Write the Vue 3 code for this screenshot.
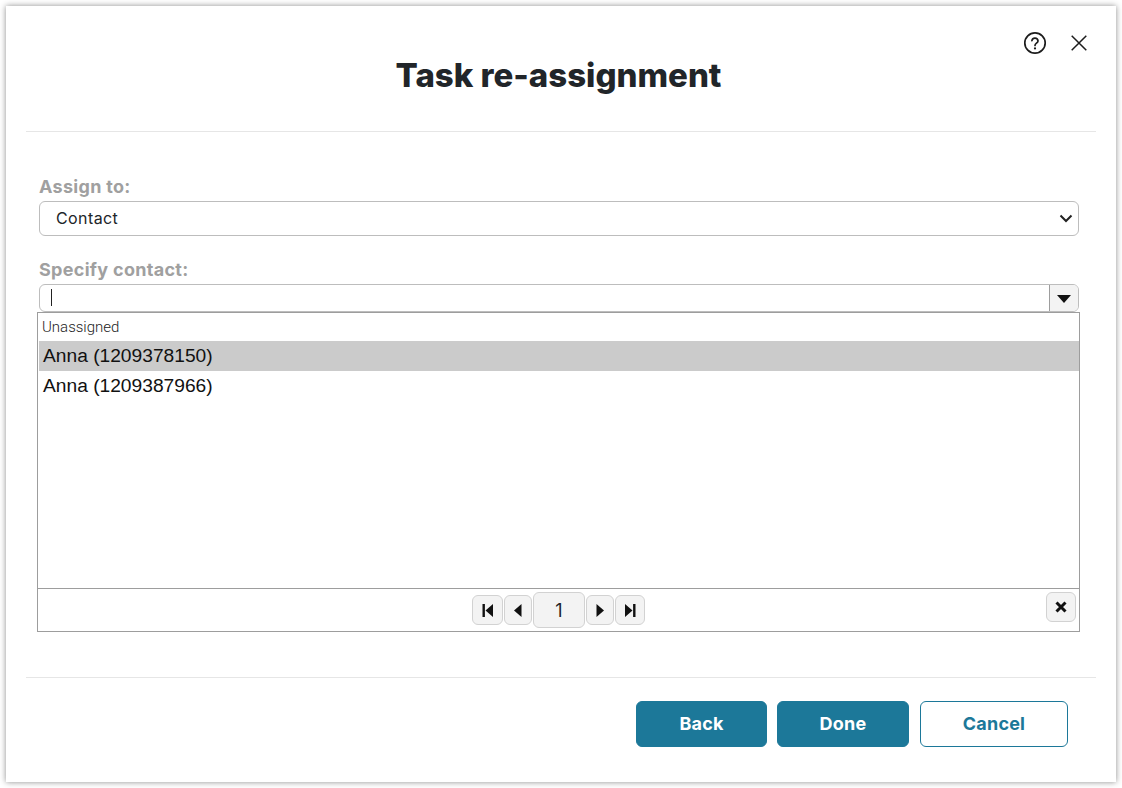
<script setup>
const contacts = [
  { name: 'Anna (1209378150)', selected: true },
  { name: 'Anna (1209387966)', selected: false },
]
</script>

<template>
  <div class="page">
    <div class="dialog">
      <header class="head">
        <span></span>
        <h1 class="title">Task re-assignment</h1>
        <div class="tools">
          <svg width="24" height="24" viewBox="0 0 24 24" fill="none" stroke="#1c1c1c" stroke-width="1.7">
            <circle cx="12" cy="12" r="10.2" />
            <path d="M8.9 9.6a3.1 3.1 0 0 1 6.1.3c0 2.1-3 2.4-3 4.5" stroke-linecap="round" />
            <circle cx="12" cy="17.4" r="1.1" fill="#1c1c1c" stroke="none" />
          </svg>
          <svg width="18" height="18" viewBox="0 0 18 18" fill="none" stroke="#1c1c1c" stroke-width="1.5">
            <path d="M1.7 1.7l14.6 14.6M16.3 1.7L1.7 16.3" />
          </svg>
        </div>
      </header>

      <main class="body">
        <label class="label first">Assign to:</label>
        <div class="select">
          <span>Contact</span>
          <svg width="14" height="9" viewBox="0 0 14 9" fill="none" stroke="#222" stroke-width="2">
            <path d="M1.5 1.5L7 7l5.5-5.5" />
          </svg>
        </div>

        <label class="label second">Specify contact:</label>
        <div class="combo">
          <div class="combo-input"><i class="caret"></i></div>
          <div class="combo-btn"><i class="tri-down"></i></div>
        </div>

        <div class="list">
          <div class="unassigned">Unassigned</div>
          <div class="rows">
            <div v-for="c in contacts" :key="c.name" class="row" :class="{ selected: c.selected }">{{ c.name }}</div>
          </div>
          <div class="pager">
            <div class="pages">
              <button class="pg w31">
                <svg width="13" height="15" viewBox="0 0 13 15"><path d="M1.5 1h2.4v13H1.500zM12 1v13L4.500 7.500z" fill="#111" /></svg>
              </button>
              <button class="pg w28">
                <svg width="12" height="15" viewBox="0 0 12 15"><path d="M9.500 1v13L2 7.500z" fill="#111" /></svg>
              </button>
              <button class="pg num">1</button>
              <button class="pg w28">
                <svg width="12" height="15" viewBox="0 0 12 15"><path d="M2.500 1v13L10 7.500z" fill="#111" /></svg>
              </button>
              <button class="pg w30">
                <svg width="13" height="15" viewBox="0 0 13 15"><path d="M1 1v13l7.500-6.500zM9.100 1h2.400v13H9.100z" fill="#111" /></svg>
              </button>
            </div>
            <button class="pg clear">
              <svg width="12" height="12" viewBox="0 0 12 12" fill="none" stroke="#111" stroke-width="3">
                <path d="M1.500 1.500l9 9M10.500 1.500l-9 9" />
              </svg>
            </button>
          </div>
        </div>
      </main>

      <footer class="foot">
        <button class="btn primary back">Back</button>
        <button class="btn primary done">Done</button>
        <button class="btn outline">Cancel</button>
      </footer>
    </div>
  </div>
</template>

<style>
html, body { margin: 0; background: #fff; }
</style>

<style scoped>
.page {
  width: 1122px;
  height: 788px;
  padding: 6px;
  box-sizing: border-box;
  overflow: hidden;
  font-family: Inter, "Liberation Sans", sans-serif;
}
.dialog {
  width: 1110px;
  height: 776px;
  background: #fff;
  box-shadow: 0 0 6px rgba(0, 0, 0, 0.45);
  display: flex;
  flex-direction: column;
}
.head {
  margin: 0 20px;
  height: 126px;
  box-sizing: border-box;
  border-bottom: 1px solid #e6e6e6;
  display: grid;
  grid-template-columns: 1fr auto 1fr;
}
.title {
  margin: 50px 5px 0 0;
  font-size: 33px;
  line-height: 39px;
  font-weight: 800;
  color: #212529;
}
.tools {
  justify-self: end;
  margin: 25px 8px 0 0;
  display: flex;
  align-items: center;
  gap: 23.5px;
  height: 24px;
}
.body {
  padding: 0 37px 0 31px;
  flex: 1;
  display: flex;
  flex-direction: column;
}
.label {
  display: block;
  margin-left: 2px;
  font-size: 18px;
  line-height: 20px;
  font-weight: 700;
  letter-spacing: 0.3px;
  color: #a0a0a0;
}
.label.first { margin-top: 45px; margin-bottom: 4px; }
.label.second { margin-top: 24px; margin-bottom: 4px; }
.select {
  margin-left: 2px;
  height: 35px;
  box-sizing: border-box;
  border: 1px solid #bdbdbd;
  border-radius: 6px;
  padding: 0 5px 0 16px;
  display: flex;
  align-items: center;
  justify-content: space-between;
  font-size: 16px;
  color: #212529;
  letter-spacing: 0.4px;
}
.select span { margin-top: -2px; }
.combo {
  margin-left: 2px;
  height: 28px;
  box-sizing: border-box;
  border: 1px solid #bdbdbd;
  border-radius: 6px;
  display: flex;
  overflow: hidden;
}
.combo-input {
  flex: 1;
  padding: 0 0 2px 11px;
  display: flex;
  align-items: center;
}
.caret {
  width: 1px;
  height: 17px;
  background: #222;
}
.combo-btn {
  width: 28px;
  background: #f3f3f3;
  border-left: 1px solid #9d9d9d;
  display: flex;
  align-items: center;
  justify-content: center;
}
.tri-down {
  width: 0;
  height: 0;
  border-left: 7px solid transparent;
  border-right: 7px solid transparent;
  border-top: 8px solid #111;
  margin-top: 2px;
}
.list {
  height: 320px;
  width: 1043px;
  box-sizing: border-box;
  border: 1px solid #9d9d9d;
  display: flex;
  flex-direction: column;
}
.unassigned {
  height: 28px;
  line-height: 28px;
  padding-left: 4px;
  font-family: Roboto, sans-serif;
  font-size: 15px;
  font-weight: 300;
  color: #222;
}
.rows {
  flex: 1;
  padding-left: 1px;
}
.row {
  height: 30px;
  line-height: 30px;
  padding-left: 4px;
  font-family: "Liberation Sans", sans-serif;
  font-size: 19.2px;
  color: #111;
}
.row.selected { background: #cbcbcb; }
.pager {
  height: 43px;
  box-sizing: border-box;
  border-top: 1px solid #9d9d9d;
  display: grid;
  grid-template-columns: 1fr auto 1fr;
  align-items: center;
}
.pages {
  grid-column: 2;
  display: flex;
  align-items: center;
  gap: 1px;
}
.pg {
  padding: 0;
  margin: 0;
  box-sizing: border-box;
  height: 30px;
  background: #f3f3f3;
  border: 1px solid #d2d2d2;
  border-radius: 6px;
  display: flex;
  align-items: center;
  justify-content: center;
}
.w31 { width: 31px; }
.w30 { width: 30px; }
.w28 { width: 28px; }
.num {
  width: 52px;
  height: 36px;
  font-family: Inter, sans-serif;
  font-size: 18px;
  color: #212529;
}
.clear {
  grid-column: 3;
  justify-self: end;
  width: 30px;
  margin: -7px 3px 0 0;
}
.foot {
  margin: 0 20px;
  height: 105px;
  box-sizing: border-box;
  border-top: 1px solid #e6e6e6;
  padding: 23px 28px 0 0;
  display: flex;
  justify-content: flex-end;
  gap: 10px;
}
.btn {
  height: 46px;
  box-sizing: border-box;
  border-radius: 6px;
  padding: 0 0 2px;
  font-family: Inter, sans-serif;
  font-size: 18px;
  font-weight: 700;
  letter-spacing: 0.2px;
}
.primary {
  background: #1c7899;
  border: 1px solid #1c7899;
  color: #fff;
}
.back { width: 131px; }
.done { width: 132px; margin-right: 1px; }
.outline {
  width: 148px;
  background: #fff;
  border: 1px solid #1c7899;
  color: #1c7899;
}
</style>
